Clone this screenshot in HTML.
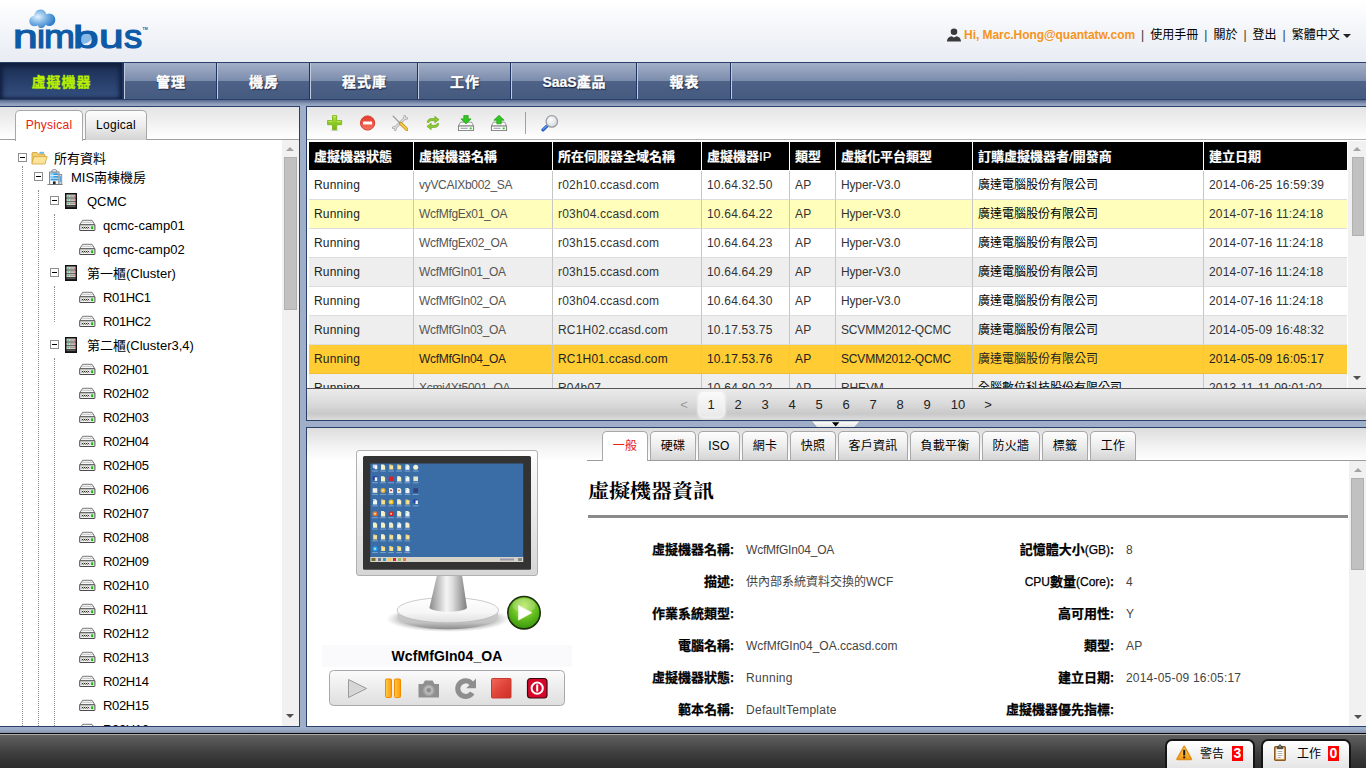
<!DOCTYPE html>
<html lang="zh-Hant"><head><meta charset="utf-8"><title>nimbus</title>
<style>

html,body{margin:0;padding:0;width:1366px;height:768px;overflow:hidden}
body{position:relative;background:#9fafc9;font-family:"Liberation Sans","Noto Sans CJK TC",sans-serif;font-size:12px;color:#000;line-height:1}
div,span,a,td,th{box-sizing:border-box}
.a{position:absolute}
svg{display:block}
/* header */
#hd{left:0;top:0;width:1366px;height:62px;background:linear-gradient(#fff 0,#f5f7fa 40%,#e8ecf3 100%)}
#logo{left:13px;top:14.9px;height:50px;font-weight:normal;-webkit-text-stroke:1.4px #0d5aa7;font-size:38.5px;line-height:50px;color:#0d5aa7;white-space:nowrap}
#logo span{display:inline-block;transform-origin:0 0}
#tm{left:142.5px;top:28px;font-size:3.5px;font-weight:bold;color:#0d5aa7}
#ub{right:15px;top:28px;height:15px;line-height:15px;font-size:12px;white-space:nowrap;color:#000}
#ub b{color:#f7941d;letter-spacing:-.06px}
#ub i{font-style:normal;margin:0 6px;color:#333}
/* nav */
#nav{left:0;top:62px;width:1366px;height:44px;background:linear-gradient(#5f6f90 0,#5f6f90 38px,#65759a 38px,#8e9ebb 41px,#9fafc9 44px);border-top:1px solid #2a3f6a}
#navin{left:0;top:0;width:1366px;height:37px;background:linear-gradient(#a3b0c8 0,#7b8bab 18px,#4f6287 18px,#455a80 36px);border-bottom:1px solid #2a3f6a}
.nb{top:0;height:36px;line-height:38px;text-align:center;color:#fff;font-weight:bold;font-size:14px;text-shadow:0 1px 1px #1c2b4a,1px 1px 1px #1c2b4a;border-left:1px solid #c2ccde;border-right:1px solid #1f3460;letter-spacing:1px;text-indent:1px;-webkit-text-stroke:.35px}
.nb u{text-decoration:none;letter-spacing:0;font-size:14px;-webkit-text-stroke:.2px}
.nb.on{background:linear-gradient(#1a2c50,#2a426f 60%,#35517f);color:#b8f000;text-shadow:none;border-left:none;border-right:2px solid #1f3460;box-shadow:inset 0 2px 6px #0f1c38,inset 2px 0 4px #15254a,inset -2px 0 4px #15254a}
/* panels */
.pn{background:#fff;border:1px solid #2a3f6a}
.tabstrip{background:linear-gradient(#e4e4e4,#fff)}
.tab{border:1px solid #a8a8a8;border-bottom:none;border-radius:5px 5px 0 0;text-align:center;font-size:12px;letter-spacing:.25px;background:linear-gradient(#fdfdfd,#ededed 50%,#d4d4d4);color:#000}
.tab.on{background:#fff;color:#e8220c}
.sbt{background:#f1f1f1}
.sbh{background:#c1c1c1;border:1px solid #b0b0b0}
.tri-u{width:0;height:0;border-left:4px solid transparent;border-right:4px solid transparent;border-bottom:4px solid #a3a3a3}
.tri-d{width:0;height:0;border-left:4px solid transparent;border-right:4px solid transparent;border-top:4px solid #505050}
/* tree */
.tr{left:0;height:16px;line-height:16px;font-size:13px;white-space:nowrap;color:#000}
.tr span{position:absolute;top:0}
.eb{width:9px;height:9px;border:1px solid #8f8f8f;background:#fff}
.eb:after{content:"";position:absolute;left:1px;top:3px;width:5px;height:1px;background:#000}
.vl{width:0;border-left:1px dotted #8c8c8c}
/* grid */
#grid{left:2px;top:1px;width:1038px;border-collapse:separate;border-spacing:0;table-layout:fixed}
#grid th{height:29px;-webkit-text-stroke:.2px;border-bottom:1px solid #fff;background:#000;color:#fff;font-weight:normal;font-size:13px;text-align:left;padding:0 0 0 5px;border-right:1px solid #fff;white-space:nowrap;overflow:hidden}
#grid td{height:29px;font-size:12px;padding:0 0 0 5px;border-right:1px solid #c6c6c6;border-bottom:1px solid #ddd;color:#333;white-space:nowrap;overflow:hidden;letter-spacing:.2px}
#grid td.c1{color:#222}
#grid td.c2{color:#555;letter-spacing:-.3px}
#grid td.cj{color:#000;letter-spacing:0}
#grid td.c6{letter-spacing:-.15px}
#grid tr.e td{background:#eee}
#grid tr.h td{background:#ffffbb}
#grid tr.s td{background:#ffcc33;color:#222;border-bottom-color:#f0c030}
#grid th:last-child,#grid td:last-child{border-right:none}
#pager{background:linear-gradient(#ebebeb 0,#d9d9d9 50%,#c9c9c9 80%,#dcdcdc 100%);border-top:1px solid #555}
.pg{top:0;height:32px;line-height:31px;font-size:13px;color:#222;text-align:center;width:20px}
/* detail */
.lb{font-weight:normal;-webkit-text-stroke:.25px;font-size:12px;text-align:right;white-space:nowrap;height:16px;line-height:16px;color:#000}
.lb .c{font-size:13px;font-weight:bold}
#grid th .c{font-size:13px;font-weight:bold}
.vv{font-size:12px;white-space:nowrap;height:16px;line-height:16px;color:#444;letter-spacing:0}
#ttl{font-family:"Liberation Serif","Noto Serif CJK SC",serif;font-weight:700;font-size:21px;line-height:24px;color:#000;white-space:nowrap;transform-origin:0 0;transform:scaleY(.94)}
/* footer */
#ft{left:0;top:733px;width:1366px;height:35px;overflow:hidden;background:linear-gradient(#626262,#3c3c3c 60%,#2c2c2c);border-top:1px solid #050505;box-shadow:inset 0 1px 0 #adadad}
.fb{top:5px;height:34px;border:2px solid #151515;border-radius:7px 7px 0 0;background:linear-gradient(#fff,#e2e2e2);font-size:12px}
.bd{background:#f00;color:#fff;font-weight:bold;font-size:14px;text-align:center;width:11px;height:15px;line-height:15px}

</style></head>
<body>
<div id="hd" class="a" style=""><div class="a" style="left:80px;top:33px;width:13px;height:11px;background:#86b8e8;border-radius:1px 1px 10px 3px"></div><div id="logo" class="a" style=""><span style="margin-left:0px;transform:scale(1.15,0.874)">n</span><span style="margin-left:2.42px;transform:scale(0.94,0.874)">i</span><span style="margin-left:-1.3px;transform:scale(0.964,0.874)">m</span><span style="margin-left:-3.23px;position:relative;top:1.4px;transform:scale(1.195,0.838)">b</span><span style="margin-left:4.19px;transform:scale(1.15,0.874)">u</span><span style="margin-left:4.1px;transform:scale(0.947,0.874)">s</span></div><div class="a" style="left:28.6px;top:8.8px"><svg width="28" height="20" viewBox="0 0 28 20" ><defs><radialGradient id="gc" cx=".33" cy=".4" r=".75"><stop offset="0" stop-color="#e6f3fc"/><stop offset=".45" stop-color="#7db5e6"/><stop offset="1" stop-color="#1f6fc0"/></radialGradient></defs><path transform="scale(1 1.06)" d="M5.2 16.2C2.2 16.2.3 14 .3 11.4.3 8.6 2.4 6.600 5 6.600 5.6 3 8.200.400 11.400.400c3 0 5.200 1.800 6 4.500 .8-.4 1.700-.6 2.600-.6 3.700 0 6.300 2.600 6.300 5.800 0 3.300-2.700 6-6 6-1.500 0-2.700-.4-3.700-1.200-.7 1.700-2.200 2.900-4 2.900-1.600 0-3-.9-3.700-2.200-1 .4-2.400.6-3.700.6z" fill="url(#gc)"/></svg></div><div id="tm" class="a" style="">TM</div><div class="a" style="left:947px;top:27.5px"><svg width="14" height="14" viewBox="0 0 14 14" ><circle cx="7" cy="3.8" r="3.3" fill="#3a3a3a"/><path d="M0 13.5c0-3 2.2-5 4.6-5.2L7 9.4l2.4-1.1c2.4.2 4.6 2.2 4.6 5.2z" fill="#3a3a3a"/></svg></div><div id="ub" class="a" style=""><b>Hi, Marc.Hong@quantatw.com</b><i>|</i>使用手冊<i>|</i>關於<i>|</i>登出<i>|</i>繁體中文 <span style="display:inline-block;width:0;height:0;border-left:4px solid transparent;border-right:4px solid transparent;border-top:4px solid #222;vertical-align:1px;margin-left:0"></span></div></div>
<div id="nav" class="a" style=""><div id="navin" class="a" style=""><div class="a nb on" style="left:0px;width:124px">虛擬機器</div><div class="a nb" style="left:124px;width:93px">管理</div><div class="a nb" style="left:217px;width:93px">機房</div><div class="a nb" style="left:310px;width:108px">程式庫</div><div class="a nb" style="left:418px;width:93px">工作</div><div class="a nb" style="left:511px;width:126px"><u>SaaS</u>產品</div><div class="a nb" style="left:637px;width:94px">報表</div><div class="a" style="left:731px;top:0;width:1px;height:36px;background:#c2ccde"></div></div></div>
<div class="a pn" style="left:-1px;top:106px;width:301px;height:621px"><div class="a tabstrip" style="left:0;top:0;width:299px;height:33px;border-bottom:1px solid #a0a0a0"></div><div class="a tab on" style="left:15px;top:3px;width:68px;height:31px;line-height:28px">Physical</div><div class="a tab" style="left:85px;top:3px;width:62px;height:30px;line-height:28px">Logical</div><div class="a" style="left:0;top:33px;width:282px;height:586px;overflow:hidden"><div class="a tr" style="top:10px;width:280px"><span class="eb" style="left:18px;top:3px"></span><span style="left:31px;top:1px"><svg width="17" height="14" viewBox="0 0 17 14" ><path d="M1 2.5c0-.6.4-1 1-1h4l1.4 1.6H13c.6 0 1 .4 1 1V12H1z" fill="#f3cf6e" stroke="#c9992e" stroke-width=".8"/><rect x="8.5" y=".8" width="4.5" height="2" fill="#6fb7e8"/><path d="M2.8 5.6h13.4L14 13H.8z" fill="#fbe39a" stroke="#d0a33a" stroke-width=".8"/></svg></span><span style="left:54px;top:1px">所有資料</span></div><div class="a tr" style="top:30px;width:280px"><span class="eb" style="left:34px;top:2px"></span><span style="left:47px;top:-1px"><svg width="16" height="16" viewBox="0 0 16 16" ><rect x="2.600" y="3" width="9.400" height="12.500" fill="#f4f7fa" stroke="#6c7680" stroke-width=".9"/><path d="M4.600 3c0-1.700 1.100-2.600 2.700-2.600S10 1.300 10 3z" fill="#e4e8ec" stroke="#6c7680" stroke-width=".8"/><g fill="#2f9be4"><rect x="3.600" y="4.200" width="7.400" height="1.800"/><rect x="3.600" y="6.900" width="7.400" height="1.800"/><rect x="3.600" y="9.600" width="7.400" height="1.800"/></g><g fill="#8fd0f6"><rect x="3.600" y="4.200" width="3" height="1.800"/><rect x="3.600" y="6.900" width="3" height="1.800"/></g><rect x="6" y="12.400" width="2.600" height="3.100" fill="#222"/><rect x="12" y="5.500" width="2.800" height="10" fill="#cfd8e0" stroke="#6c7680" stroke-width=".7"/><rect x="12.700" y="7" width="1.400" height="6" fill="#5aa8dc"/><rect x=".3" y="15.200" width="15.400" height=".8" fill="#777"/></svg></span><span style="left:71px">MIS南棟機房</span></div><div class="a tr" style="top:54px;width:280px"><span class="eb" style="left:50px;top:2px"></span><span style="left:65px;top:-1px"><svg width="12" height="16" viewBox="0 0 12 16" ><rect x=".5" y=".5" width="11" height="15" fill="#1e1e1e" stroke="#111" stroke-width="1"/><g fill="#dcdcdc"><rect x="1.500" y="1.600" width="9" height="3"/><rect x="1.500" y="5.400" width="9" height="3"/><rect x="1.500" y="9.200" width="9" height="3"/></g><g><rect x="2.400" y="2.600" width="1.600" height="1" fill="#2fae3c"/><rect x="4.800" y="2.600" width="3" height="1" fill="#888"/><rect x="8.400" y="2.600" width="1.300" height="1" fill="#d22"/><rect x="2.400" y="6.400" width="1.600" height="1" fill="#2fae3c"/><rect x="4.800" y="6.400" width="3" height="1" fill="#888"/><rect x="8.400" y="6.400" width="1.300" height="1" fill="#d22"/><rect x="2.400" y="10.200" width="1.600" height="1" fill="#2fae3c"/><rect x="4.800" y="10.200" width="3" height="1" fill="#888"/><rect x="8.400" y="10.200" width="1.300" height="1" fill="#d22"/></g><rect x="1.500" y="13" width="9" height=".8" fill="#666"/></svg></span><span style="left:87px">QCMC</span></div><div class="a tr" style="top:78px;width:280px"><span style="left:79px;top:1px"><svg width="17" height="13" viewBox="0 0 17 13" ><path d="M3.600 1.300h9.400l2.900 4.500H.7z" fill="#f6f6f6" stroke="#6a6a6a" stroke-width=".9" stroke-linejoin="round"/><path d="M3 3.400h10.600" stroke="#bdbdbd" stroke-width=".8"/><rect x=".7" y="5.800" width="15.200" height="5.700" rx=".4" fill="#f4f4f4" stroke="#4a4a4a" stroke-width="1"/><rect x="2.400" y="7.500" width="8" height="2.300" fill="#fff"/><path d="M2.600 7.800l1.600 1.700M4.200 7.800L2.600 9.500M4.600 7.800l1.600 1.700M6.200 7.800L4.600 9.500M6.600 7.800l1.600 1.700M8.200 7.800L6.600 9.500M8.600 7.800l1.600 1.700M10.200 7.800L8.600 9.500" stroke="#111" stroke-width=".75"/><rect x="11.900" y="7.300" width="2.300" height="2.800" fill="#25b81a"/></svg></span><span style="left:103px">qcmc-camp01</span></div><div class="a tr" style="top:102px;width:280px"><span style="left:79px;top:1px"><svg width="17" height="13" viewBox="0 0 17 13" ><path d="M3.600 1.300h9.400l2.900 4.500H.7z" fill="#f6f6f6" stroke="#6a6a6a" stroke-width=".9" stroke-linejoin="round"/><path d="M3 3.400h10.600" stroke="#bdbdbd" stroke-width=".8"/><rect x=".7" y="5.800" width="15.200" height="5.700" rx=".4" fill="#f4f4f4" stroke="#4a4a4a" stroke-width="1"/><rect x="2.400" y="7.500" width="8" height="2.300" fill="#fff"/><path d="M2.600 7.800l1.600 1.700M4.200 7.800L2.600 9.500M4.600 7.800l1.600 1.700M6.200 7.800L4.600 9.500M6.600 7.800l1.600 1.700M8.200 7.800L6.600 9.500M8.600 7.800l1.600 1.700M10.200 7.800L8.600 9.500" stroke="#111" stroke-width=".75"/><rect x="11.900" y="7.300" width="2.300" height="2.800" fill="#25b81a"/></svg></span><span style="left:103px">qcmc-camp02</span></div><div class="a tr" style="top:126px;width:280px"><span class="eb" style="left:50px;top:2px"></span><span style="left:65px;top:-1px"><svg width="12" height="16" viewBox="0 0 12 16" ><rect x=".5" y=".5" width="11" height="15" fill="#1e1e1e" stroke="#111" stroke-width="1"/><g fill="#dcdcdc"><rect x="1.500" y="1.600" width="9" height="3"/><rect x="1.500" y="5.400" width="9" height="3"/><rect x="1.500" y="9.200" width="9" height="3"/></g><g><rect x="2.400" y="2.600" width="1.600" height="1" fill="#2fae3c"/><rect x="4.800" y="2.600" width="3" height="1" fill="#888"/><rect x="8.400" y="2.600" width="1.300" height="1" fill="#d22"/><rect x="2.400" y="6.400" width="1.600" height="1" fill="#2fae3c"/><rect x="4.800" y="6.400" width="3" height="1" fill="#888"/><rect x="8.400" y="6.400" width="1.300" height="1" fill="#d22"/><rect x="2.400" y="10.200" width="1.600" height="1" fill="#2fae3c"/><rect x="4.800" y="10.200" width="3" height="1" fill="#888"/><rect x="8.400" y="10.200" width="1.300" height="1" fill="#d22"/></g><rect x="1.500" y="13" width="9" height=".8" fill="#666"/></svg></span><span style="left:87px">第一櫃(Cluster)</span></div><div class="a tr" style="top:150px;width:280px"><span style="left:79px;top:1px"><svg width="17" height="13" viewBox="0 0 17 13" ><path d="M3.600 1.300h9.400l2.900 4.500H.7z" fill="#f6f6f6" stroke="#6a6a6a" stroke-width=".9" stroke-linejoin="round"/><path d="M3 3.400h10.600" stroke="#bdbdbd" stroke-width=".8"/><rect x=".7" y="5.800" width="15.200" height="5.700" rx=".4" fill="#f4f4f4" stroke="#4a4a4a" stroke-width="1"/><rect x="2.400" y="7.500" width="8" height="2.300" fill="#fff"/><path d="M2.600 7.800l1.600 1.700M4.200 7.800L2.600 9.500M4.600 7.800l1.600 1.700M6.200 7.800L4.600 9.500M6.600 7.800l1.600 1.700M8.200 7.800L6.600 9.500M8.600 7.800l1.600 1.700M10.200 7.800L8.600 9.500" stroke="#111" stroke-width=".75"/><rect x="11.900" y="7.300" width="2.300" height="2.800" fill="#25b81a"/></svg></span><span style="left:103px;letter-spacing:-.35px">R01HC1</span></div><div class="a tr" style="top:174px;width:280px"><span style="left:79px;top:1px"><svg width="17" height="13" viewBox="0 0 17 13" ><path d="M3.600 1.300h9.400l2.900 4.500H.7z" fill="#f6f6f6" stroke="#6a6a6a" stroke-width=".9" stroke-linejoin="round"/><path d="M3 3.400h10.600" stroke="#bdbdbd" stroke-width=".8"/><rect x=".7" y="5.800" width="15.200" height="5.700" rx=".4" fill="#f4f4f4" stroke="#4a4a4a" stroke-width="1"/><rect x="2.400" y="7.500" width="8" height="2.300" fill="#fff"/><path d="M2.600 7.800l1.600 1.700M4.200 7.800L2.600 9.500M4.600 7.800l1.600 1.700M6.200 7.800L4.600 9.500M6.600 7.800l1.600 1.700M8.200 7.800L6.600 9.500M8.600 7.800l1.600 1.700M10.200 7.800L8.600 9.500" stroke="#111" stroke-width=".75"/><rect x="11.900" y="7.300" width="2.300" height="2.800" fill="#25b81a"/></svg></span><span style="left:103px;letter-spacing:-.35px">R01HC2</span></div><div class="a tr" style="top:198px;width:280px"><span class="eb" style="left:50px;top:2px"></span><span style="left:65px;top:-1px"><svg width="12" height="16" viewBox="0 0 12 16" ><rect x=".5" y=".5" width="11" height="15" fill="#1e1e1e" stroke="#111" stroke-width="1"/><g fill="#dcdcdc"><rect x="1.500" y="1.600" width="9" height="3"/><rect x="1.500" y="5.400" width="9" height="3"/><rect x="1.500" y="9.200" width="9" height="3"/></g><g><rect x="2.400" y="2.600" width="1.600" height="1" fill="#2fae3c"/><rect x="4.800" y="2.600" width="3" height="1" fill="#888"/><rect x="8.400" y="2.600" width="1.300" height="1" fill="#d22"/><rect x="2.400" y="6.400" width="1.600" height="1" fill="#2fae3c"/><rect x="4.800" y="6.400" width="3" height="1" fill="#888"/><rect x="8.400" y="6.400" width="1.300" height="1" fill="#d22"/><rect x="2.400" y="10.200" width="1.600" height="1" fill="#2fae3c"/><rect x="4.800" y="10.200" width="3" height="1" fill="#888"/><rect x="8.400" y="10.200" width="1.300" height="1" fill="#d22"/></g><rect x="1.500" y="13" width="9" height=".8" fill="#666"/></svg></span><span style="left:87px">第二櫃(Cluster3,4)</span></div><div class="a tr" style="top:222px;width:280px"><span style="left:79px;top:1px"><svg width="17" height="13" viewBox="0 0 17 13" ><path d="M3.600 1.300h9.400l2.900 4.500H.7z" fill="#f6f6f6" stroke="#6a6a6a" stroke-width=".9" stroke-linejoin="round"/><path d="M3 3.400h10.600" stroke="#bdbdbd" stroke-width=".8"/><rect x=".7" y="5.800" width="15.200" height="5.700" rx=".4" fill="#f4f4f4" stroke="#4a4a4a" stroke-width="1"/><rect x="2.400" y="7.500" width="8" height="2.300" fill="#fff"/><path d="M2.600 7.800l1.600 1.700M4.200 7.800L2.600 9.500M4.600 7.800l1.600 1.700M6.200 7.800L4.600 9.500M6.600 7.800l1.600 1.700M8.200 7.800L6.600 9.500M8.600 7.800l1.600 1.700M10.200 7.800L8.600 9.500" stroke="#111" stroke-width=".75"/><rect x="11.900" y="7.300" width="2.300" height="2.800" fill="#25b81a"/></svg></span><span style="left:103px;letter-spacing:-.35px">R02H01</span></div><div class="a tr" style="top:246px;width:280px"><span style="left:79px;top:1px"><svg width="17" height="13" viewBox="0 0 17 13" ><path d="M3.600 1.300h9.400l2.900 4.500H.7z" fill="#f6f6f6" stroke="#6a6a6a" stroke-width=".9" stroke-linejoin="round"/><path d="M3 3.400h10.600" stroke="#bdbdbd" stroke-width=".8"/><rect x=".7" y="5.800" width="15.200" height="5.700" rx=".4" fill="#f4f4f4" stroke="#4a4a4a" stroke-width="1"/><rect x="2.400" y="7.500" width="8" height="2.300" fill="#fff"/><path d="M2.600 7.800l1.600 1.700M4.200 7.800L2.600 9.500M4.600 7.800l1.600 1.700M6.200 7.800L4.600 9.500M6.600 7.800l1.600 1.700M8.200 7.800L6.600 9.500M8.600 7.800l1.600 1.700M10.200 7.800L8.600 9.500" stroke="#111" stroke-width=".75"/><rect x="11.900" y="7.300" width="2.300" height="2.800" fill="#25b81a"/></svg></span><span style="left:103px;letter-spacing:-.35px">R02H02</span></div><div class="a tr" style="top:270px;width:280px"><span style="left:79px;top:1px"><svg width="17" height="13" viewBox="0 0 17 13" ><path d="M3.600 1.300h9.400l2.900 4.500H.7z" fill="#f6f6f6" stroke="#6a6a6a" stroke-width=".9" stroke-linejoin="round"/><path d="M3 3.400h10.600" stroke="#bdbdbd" stroke-width=".8"/><rect x=".7" y="5.800" width="15.200" height="5.700" rx=".4" fill="#f4f4f4" stroke="#4a4a4a" stroke-width="1"/><rect x="2.400" y="7.500" width="8" height="2.300" fill="#fff"/><path d="M2.600 7.800l1.600 1.700M4.200 7.800L2.600 9.500M4.600 7.800l1.600 1.700M6.200 7.800L4.600 9.500M6.600 7.800l1.600 1.700M8.200 7.800L6.600 9.500M8.600 7.800l1.600 1.700M10.200 7.800L8.600 9.500" stroke="#111" stroke-width=".75"/><rect x="11.900" y="7.300" width="2.300" height="2.800" fill="#25b81a"/></svg></span><span style="left:103px;letter-spacing:-.35px">R02H03</span></div><div class="a tr" style="top:294px;width:280px"><span style="left:79px;top:1px"><svg width="17" height="13" viewBox="0 0 17 13" ><path d="M3.600 1.300h9.400l2.900 4.500H.7z" fill="#f6f6f6" stroke="#6a6a6a" stroke-width=".9" stroke-linejoin="round"/><path d="M3 3.400h10.600" stroke="#bdbdbd" stroke-width=".8"/><rect x=".7" y="5.800" width="15.200" height="5.700" rx=".4" fill="#f4f4f4" stroke="#4a4a4a" stroke-width="1"/><rect x="2.400" y="7.500" width="8" height="2.300" fill="#fff"/><path d="M2.600 7.800l1.600 1.700M4.200 7.800L2.600 9.500M4.600 7.800l1.600 1.700M6.200 7.800L4.600 9.500M6.600 7.800l1.600 1.700M8.200 7.800L6.600 9.500M8.600 7.800l1.600 1.700M10.200 7.800L8.600 9.500" stroke="#111" stroke-width=".75"/><rect x="11.900" y="7.300" width="2.300" height="2.800" fill="#25b81a"/></svg></span><span style="left:103px;letter-spacing:-.35px">R02H04</span></div><div class="a tr" style="top:318px;width:280px"><span style="left:79px;top:1px"><svg width="17" height="13" viewBox="0 0 17 13" ><path d="M3.600 1.300h9.400l2.900 4.500H.7z" fill="#f6f6f6" stroke="#6a6a6a" stroke-width=".9" stroke-linejoin="round"/><path d="M3 3.400h10.600" stroke="#bdbdbd" stroke-width=".8"/><rect x=".7" y="5.800" width="15.200" height="5.700" rx=".4" fill="#f4f4f4" stroke="#4a4a4a" stroke-width="1"/><rect x="2.400" y="7.500" width="8" height="2.300" fill="#fff"/><path d="M2.600 7.800l1.600 1.700M4.200 7.800L2.600 9.500M4.600 7.800l1.600 1.700M6.200 7.800L4.600 9.500M6.600 7.800l1.600 1.700M8.200 7.800L6.600 9.500M8.600 7.800l1.600 1.700M10.200 7.800L8.600 9.500" stroke="#111" stroke-width=".75"/><rect x="11.900" y="7.300" width="2.300" height="2.800" fill="#25b81a"/></svg></span><span style="left:103px;letter-spacing:-.35px">R02H05</span></div><div class="a tr" style="top:342px;width:280px"><span style="left:79px;top:1px"><svg width="17" height="13" viewBox="0 0 17 13" ><path d="M3.600 1.300h9.400l2.900 4.500H.7z" fill="#f6f6f6" stroke="#6a6a6a" stroke-width=".9" stroke-linejoin="round"/><path d="M3 3.400h10.600" stroke="#bdbdbd" stroke-width=".8"/><rect x=".7" y="5.800" width="15.200" height="5.700" rx=".4" fill="#f4f4f4" stroke="#4a4a4a" stroke-width="1"/><rect x="2.400" y="7.500" width="8" height="2.300" fill="#fff"/><path d="M2.600 7.800l1.600 1.700M4.200 7.800L2.600 9.500M4.600 7.800l1.600 1.700M6.200 7.800L4.600 9.500M6.600 7.800l1.600 1.700M8.200 7.800L6.600 9.500M8.600 7.800l1.600 1.700M10.200 7.800L8.600 9.500" stroke="#111" stroke-width=".75"/><rect x="11.900" y="7.300" width="2.300" height="2.800" fill="#25b81a"/></svg></span><span style="left:103px;letter-spacing:-.35px">R02H06</span></div><div class="a tr" style="top:366px;width:280px"><span style="left:79px;top:1px"><svg width="17" height="13" viewBox="0 0 17 13" ><path d="M3.600 1.300h9.400l2.900 4.500H.7z" fill="#f6f6f6" stroke="#6a6a6a" stroke-width=".9" stroke-linejoin="round"/><path d="M3 3.400h10.600" stroke="#bdbdbd" stroke-width=".8"/><rect x=".7" y="5.800" width="15.200" height="5.700" rx=".4" fill="#f4f4f4" stroke="#4a4a4a" stroke-width="1"/><rect x="2.400" y="7.500" width="8" height="2.300" fill="#fff"/><path d="M2.600 7.800l1.600 1.700M4.200 7.800L2.600 9.500M4.600 7.800l1.600 1.700M6.200 7.800L4.600 9.500M6.600 7.800l1.600 1.700M8.200 7.800L6.600 9.500M8.600 7.800l1.600 1.700M10.200 7.800L8.600 9.500" stroke="#111" stroke-width=".75"/><rect x="11.900" y="7.300" width="2.300" height="2.800" fill="#25b81a"/></svg></span><span style="left:103px;letter-spacing:-.35px">R02H07</span></div><div class="a tr" style="top:390px;width:280px"><span style="left:79px;top:1px"><svg width="17" height="13" viewBox="0 0 17 13" ><path d="M3.600 1.300h9.400l2.900 4.500H.7z" fill="#f6f6f6" stroke="#6a6a6a" stroke-width=".9" stroke-linejoin="round"/><path d="M3 3.400h10.600" stroke="#bdbdbd" stroke-width=".8"/><rect x=".7" y="5.800" width="15.200" height="5.700" rx=".4" fill="#f4f4f4" stroke="#4a4a4a" stroke-width="1"/><rect x="2.400" y="7.500" width="8" height="2.300" fill="#fff"/><path d="M2.600 7.800l1.600 1.700M4.200 7.800L2.600 9.500M4.600 7.800l1.600 1.700M6.200 7.800L4.600 9.500M6.600 7.800l1.600 1.700M8.200 7.800L6.600 9.500M8.600 7.800l1.600 1.700M10.200 7.800L8.600 9.500" stroke="#111" stroke-width=".75"/><rect x="11.900" y="7.300" width="2.300" height="2.800" fill="#25b81a"/></svg></span><span style="left:103px;letter-spacing:-.35px">R02H08</span></div><div class="a tr" style="top:414px;width:280px"><span style="left:79px;top:1px"><svg width="17" height="13" viewBox="0 0 17 13" ><path d="M3.600 1.300h9.400l2.900 4.500H.7z" fill="#f6f6f6" stroke="#6a6a6a" stroke-width=".9" stroke-linejoin="round"/><path d="M3 3.400h10.600" stroke="#bdbdbd" stroke-width=".8"/><rect x=".7" y="5.800" width="15.200" height="5.700" rx=".4" fill="#f4f4f4" stroke="#4a4a4a" stroke-width="1"/><rect x="2.400" y="7.500" width="8" height="2.300" fill="#fff"/><path d="M2.600 7.800l1.600 1.700M4.200 7.800L2.600 9.500M4.600 7.800l1.600 1.700M6.200 7.800L4.600 9.500M6.600 7.800l1.600 1.700M8.200 7.800L6.600 9.500M8.600 7.800l1.600 1.700M10.200 7.800L8.600 9.500" stroke="#111" stroke-width=".75"/><rect x="11.900" y="7.300" width="2.300" height="2.800" fill="#25b81a"/></svg></span><span style="left:103px;letter-spacing:-.35px">R02H09</span></div><div class="a tr" style="top:438px;width:280px"><span style="left:79px;top:1px"><svg width="17" height="13" viewBox="0 0 17 13" ><path d="M3.600 1.300h9.400l2.900 4.500H.7z" fill="#f6f6f6" stroke="#6a6a6a" stroke-width=".9" stroke-linejoin="round"/><path d="M3 3.400h10.600" stroke="#bdbdbd" stroke-width=".8"/><rect x=".7" y="5.800" width="15.200" height="5.700" rx=".4" fill="#f4f4f4" stroke="#4a4a4a" stroke-width="1"/><rect x="2.400" y="7.500" width="8" height="2.300" fill="#fff"/><path d="M2.600 7.800l1.600 1.700M4.200 7.800L2.600 9.500M4.600 7.800l1.600 1.700M6.200 7.800L4.600 9.500M6.600 7.800l1.600 1.700M8.200 7.800L6.600 9.500M8.600 7.800l1.600 1.700M10.200 7.800L8.600 9.500" stroke="#111" stroke-width=".75"/><rect x="11.900" y="7.300" width="2.300" height="2.800" fill="#25b81a"/></svg></span><span style="left:103px;letter-spacing:-.35px">R02H10</span></div><div class="a tr" style="top:462px;width:280px"><span style="left:79px;top:1px"><svg width="17" height="13" viewBox="0 0 17 13" ><path d="M3.600 1.300h9.400l2.900 4.500H.7z" fill="#f6f6f6" stroke="#6a6a6a" stroke-width=".9" stroke-linejoin="round"/><path d="M3 3.400h10.600" stroke="#bdbdbd" stroke-width=".8"/><rect x=".7" y="5.800" width="15.200" height="5.700" rx=".4" fill="#f4f4f4" stroke="#4a4a4a" stroke-width="1"/><rect x="2.400" y="7.500" width="8" height="2.300" fill="#fff"/><path d="M2.600 7.800l1.600 1.700M4.200 7.800L2.600 9.500M4.600 7.800l1.600 1.700M6.200 7.800L4.600 9.500M6.600 7.800l1.600 1.700M8.200 7.800L6.600 9.500M8.600 7.800l1.600 1.700M10.200 7.800L8.600 9.500" stroke="#111" stroke-width=".75"/><rect x="11.900" y="7.300" width="2.300" height="2.800" fill="#25b81a"/></svg></span><span style="left:103px;letter-spacing:-.35px">R02H11</span></div><div class="a tr" style="top:486px;width:280px"><span style="left:79px;top:1px"><svg width="17" height="13" viewBox="0 0 17 13" ><path d="M3.600 1.300h9.400l2.900 4.500H.7z" fill="#f6f6f6" stroke="#6a6a6a" stroke-width=".9" stroke-linejoin="round"/><path d="M3 3.400h10.600" stroke="#bdbdbd" stroke-width=".8"/><rect x=".7" y="5.800" width="15.200" height="5.700" rx=".4" fill="#f4f4f4" stroke="#4a4a4a" stroke-width="1"/><rect x="2.400" y="7.500" width="8" height="2.300" fill="#fff"/><path d="M2.600 7.800l1.600 1.700M4.200 7.800L2.600 9.500M4.600 7.800l1.600 1.700M6.200 7.800L4.600 9.500M6.600 7.800l1.600 1.700M8.200 7.800L6.600 9.500M8.600 7.800l1.600 1.700M10.200 7.800L8.600 9.500" stroke="#111" stroke-width=".75"/><rect x="11.900" y="7.300" width="2.300" height="2.800" fill="#25b81a"/></svg></span><span style="left:103px;letter-spacing:-.35px">R02H12</span></div><div class="a tr" style="top:510px;width:280px"><span style="left:79px;top:1px"><svg width="17" height="13" viewBox="0 0 17 13" ><path d="M3.600 1.300h9.400l2.900 4.500H.7z" fill="#f6f6f6" stroke="#6a6a6a" stroke-width=".9" stroke-linejoin="round"/><path d="M3 3.400h10.600" stroke="#bdbdbd" stroke-width=".8"/><rect x=".7" y="5.800" width="15.200" height="5.700" rx=".4" fill="#f4f4f4" stroke="#4a4a4a" stroke-width="1"/><rect x="2.400" y="7.500" width="8" height="2.300" fill="#fff"/><path d="M2.600 7.800l1.600 1.700M4.200 7.800L2.600 9.500M4.600 7.800l1.600 1.700M6.200 7.800L4.600 9.500M6.600 7.800l1.600 1.700M8.200 7.800L6.600 9.500M8.600 7.800l1.600 1.700M10.200 7.800L8.600 9.500" stroke="#111" stroke-width=".75"/><rect x="11.900" y="7.300" width="2.300" height="2.800" fill="#25b81a"/></svg></span><span style="left:103px;letter-spacing:-.35px">R02H13</span></div><div class="a tr" style="top:534px;width:280px"><span style="left:79px;top:1px"><svg width="17" height="13" viewBox="0 0 17 13" ><path d="M3.600 1.300h9.400l2.900 4.500H.7z" fill="#f6f6f6" stroke="#6a6a6a" stroke-width=".9" stroke-linejoin="round"/><path d="M3 3.400h10.600" stroke="#bdbdbd" stroke-width=".8"/><rect x=".7" y="5.800" width="15.200" height="5.700" rx=".4" fill="#f4f4f4" stroke="#4a4a4a" stroke-width="1"/><rect x="2.400" y="7.500" width="8" height="2.300" fill="#fff"/><path d="M2.600 7.800l1.600 1.700M4.200 7.800L2.600 9.500M4.600 7.800l1.600 1.700M6.200 7.800L4.600 9.500M6.600 7.800l1.600 1.700M8.200 7.800L6.600 9.500M8.600 7.800l1.600 1.700M10.200 7.800L8.600 9.500" stroke="#111" stroke-width=".75"/><rect x="11.900" y="7.300" width="2.300" height="2.800" fill="#25b81a"/></svg></span><span style="left:103px;letter-spacing:-.35px">R02H14</span></div><div class="a tr" style="top:558px;width:280px"><span style="left:79px;top:1px"><svg width="17" height="13" viewBox="0 0 17 13" ><path d="M3.600 1.300h9.400l2.900 4.500H.7z" fill="#f6f6f6" stroke="#6a6a6a" stroke-width=".9" stroke-linejoin="round"/><path d="M3 3.400h10.600" stroke="#bdbdbd" stroke-width=".8"/><rect x=".7" y="5.800" width="15.200" height="5.700" rx=".4" fill="#f4f4f4" stroke="#4a4a4a" stroke-width="1"/><rect x="2.400" y="7.500" width="8" height="2.300" fill="#fff"/><path d="M2.600 7.800l1.600 1.700M4.200 7.800L2.600 9.500M4.600 7.800l1.600 1.700M6.200 7.800L4.600 9.500M6.600 7.800l1.600 1.700M8.200 7.800L6.600 9.500M8.600 7.800l1.600 1.700M10.200 7.800L8.600 9.500" stroke="#111" stroke-width=".75"/><rect x="11.900" y="7.300" width="2.300" height="2.800" fill="#25b81a"/></svg></span><span style="left:103px;letter-spacing:-.35px">R02H15</span></div><div class="a tr" style="top:582px;width:280px"><span style="left:79px;top:1px"><svg width="17" height="13" viewBox="0 0 17 13" ><path d="M3.600 1.300h9.400l2.900 4.500H.7z" fill="#f6f6f6" stroke="#6a6a6a" stroke-width=".9" stroke-linejoin="round"/><path d="M3 3.400h10.600" stroke="#bdbdbd" stroke-width=".8"/><rect x=".7" y="5.800" width="15.200" height="5.700" rx=".4" fill="#f4f4f4" stroke="#4a4a4a" stroke-width="1"/><rect x="2.400" y="7.500" width="8" height="2.300" fill="#fff"/><path d="M2.600 7.800l1.600 1.700M4.200 7.800L2.600 9.500M4.600 7.800l1.600 1.700M6.200 7.800L4.600 9.500M6.600 7.800l1.600 1.700M8.200 7.800L6.600 9.500M8.600 7.800l1.600 1.700M10.200 7.800L8.600 9.500" stroke="#111" stroke-width=".75"/><rect x="11.900" y="7.300" width="2.300" height="2.800" fill="#25b81a"/></svg></span><span style="left:103px;letter-spacing:-.35px">R02H16</span></div><div class="a vl" style="left:22px;top:26px;height:562px"></div><div class="a vl" style="left:38px;top:50px;height:538px"></div><div class="a vl" style="left:54px;top:74px;height:36px"></div><div class="a vl" style="left:54px;top:146px;height:36px"></div><div class="a vl" style="left:54px;top:218px;height:370px"></div></div><div class="a sbt" style="left:282px;top:33px;width:17px;height:586px"><div class="a tri-u" style="left:4px;top:7px"></div><div class="a sbh" style="left:2px;top:17px;width:13px;height:153px"></div><div class="a tri-d" style="left:4px;top:574px"></div></div></div>
<div class="a pn" style="left:306px;top:106px;width:1061px;height:315px;border-right:none"><div class="a tabstrip" style="left:0;top:0;width:1059px;height:33px;border-bottom:1px solid #b0b0b0"><div class="a" style="left:20px;top:8px"><svg width="16" height="16" viewBox="0 0 16 16" ><defs><linearGradient id="gp" x1="0" y1="0" x2="0" y2="1"><stop offset="0" stop-color="#b4e24c"/><stop offset=".5" stop-color="#8fcb24"/><stop offset="1" stop-color="#78b410"/></linearGradient></defs><ellipse cx="7.6" cy="15.300" rx="4" ry=".6" fill="#999" opacity=".5"/><path d="M5.500 .6h4.200v4.900h4.900v4.200H9.700v4.900H5.500V9.700H.6V5.500h4.900z" fill="url(#gp)" stroke="#7cb518" stroke-width=".9" stroke-linejoin="round"/><path d="M6.300 1.500h2.600M1.500 6.300h3.800M9.900 6.300h3.800" stroke="#d8f29a" stroke-width=".7"/></svg></div><div class="a" style="left:53px;top:8px"><svg width="16" height="16" viewBox="0 0 16 16" ><defs><linearGradient id="gm" x1="0" y1="0" x2="0" y2="1"><stop offset="0" stop-color="#e33c2c"/><stop offset=".5" stop-color="#ec5442"/><stop offset="1" stop-color="#f47a62"/></linearGradient></defs><circle cx="7.600" cy="8" r="7.100" fill="url(#gm)" stroke="#d93c2e" stroke-width="1"/><rect x="3.100" y="6.600" width="9" height="2.900" rx=".3" fill="#fff"/></svg></div><div class="a" style="left:85px;top:8px"><svg width="16" height="16" viewBox="0 0 16 16" ><g fill="none" stroke-linecap="round"><path d="M3 13L13 3" stroke="#a2a2a2" stroke-width="2.800"/><path d="M12.400 3.600L12.700 1M12.400 3.600L15 3.300M3.600 12.400L1 12.700M3.600 12.400L3.300 15" stroke="#a2a2a2" stroke-width="2.200"/><path d="M3 13L13 3" stroke="#e2e2e2" stroke-width="1.500"/><path d="M12.400 3.600L12.700 1.100M12.400 3.600L14.900 3.300M3.600 12.400L1.100 12.700M3.600 12.400L3.300 14.900" stroke="#e2e2e2" stroke-width="1"/><path d="M1.200 1.300l7.300 7.200" stroke="#9e9e9e" stroke-width="1.300"/><path d="M8.800 8.500l6 5.900" stroke="#b98a14" stroke-width="3.200"/><path d="M8.900 8.600l5.800 5.700" stroke="#f6cc40" stroke-width="1.900"/></g></svg></div><div class="a" style="left:118px;top:8px"><svg width="16" height="16" viewBox="0 0 16 16" ><g fill="#8cc832" stroke="#6aa018" stroke-width=".6" stroke-linejoin="round"><path d="M2.200 7.400c.2-2.500 2-3.900 4.300-3.900h3.300V1.300l4.300 3.300-4.300 3.300V5.700H6.700c-1.300 0-2.300.6-2.700 1.700z"/><path d="M13.800 8.600c-.2 2.500-2 3.900-4.300 3.900H6.200v2.200L1.900 11.400l4.300-3.300v2.200h3.100c1.300 0 2.300-.6 2.700-1.700z"/></g></svg></div><div class="a" style="left:150px;top:8px"><svg width="18" height="16" viewBox="0 0 18 16" ><path d="M3.400 7.200h11.200l2 3.800H1.400z" fill="#fafafa" stroke="#909090" stroke-width=".9" stroke-linejoin="round"/><rect x="1.500" y="11" width="15" height="4.600" fill="#fff" stroke="#868686" stroke-width="1.100"/><rect x="3.600" y="12.700" width="7" height="1.300" fill="#a9adbc"/><rect x="12.700" y="12.500" width="2" height="1.800" fill="#2fc41e"/><path d="M6.800 .4h4.400v3.500h2.900L9 8.800 3.900 3.900h2.900z" fill="#2fc820" stroke="#249a18" stroke-width=".7" stroke-linejoin="round"/></svg></div><div class="a" style="left:183px;top:8px"><svg width="18" height="16" viewBox="0 0 18 16" ><path d="M3.400 7.200h11.200l2 3.800H1.400z" fill="#fafafa" stroke="#909090" stroke-width=".9" stroke-linejoin="round"/><rect x="1.500" y="11" width="15" height="4.600" fill="#fff" stroke="#868686" stroke-width="1.100"/><rect x="3.600" y="12.700" width="7" height="1.300" fill="#a9adbc"/><rect x="12.700" y="12.500" width="2" height="1.800" fill="#2fc41e"/><path d="M6.800 8.800h4.400V5.200h2.900L9 .3 3.900 5.200h2.900z" fill="#2fc820" stroke="#249a18" stroke-width=".7" stroke-linejoin="round"/></svg></div><div class="a" style="left:234px;top:8px"><svg width="18" height="17" viewBox="0 0 18 17" ><defs><radialGradient id="gg" cx=".4" cy=".35" r=".7"><stop offset="0" stop-color="#fdfdfd"/><stop offset="1" stop-color="#d4d8dc"/></radialGradient></defs><path d="M2 14.800l4.400-4.200" stroke="#2458c8" stroke-width="3.200" stroke-linecap="round"/><path d="M2.200 14.200l3.800-3.600" stroke="#6aa4f4" stroke-width="1.100" stroke-linecap="round"/><circle cx="10.800" cy="6.400" r="5.700" fill="url(#gg)" stroke="#9a9ea4" stroke-width="1.300"/></svg></div><div class="a" style="left:218px;top:5px;width:1px;height:22px;background:#a0a0a0"></div></div><div class="a" style="left:0;top:34px;width:1059px;height:247px;overflow:hidden;background:#fff"><table id="grid" class="a"><colgroup><col style="width:105px"><col style="width:139px"><col style="width:149px"><col style="width:88px"><col style="width:46px"><col style="width:137px"><col style="width:231px"><col style="width:143px"></colgroup><tr><th><span class="c">虛擬機器狀態</span></th><th><span class="c">虛擬機器名稱</span></th><th><span class="c">所在伺服器全域名稱</span></th><th><span class="c">虛擬機器</span>IP</th><th><span class="c">類型</span></th><th><span class="c">虛擬化平台類型</span></th><th><span class="c">訂購虛擬機器者</span>/<span class="c">開發商</span></th><th><span class="c">建立日期</span></th></tr><tr class=""><td class="c1">Running</td><td class="c2">vyVCAIXb002_SA</td><td>r02h10.ccasd.com</td><td>10.64.32.50</td><td>AP</td><td class="c6">Hyper-V3.0</td><td class="cj">廣達電腦股份有限公司</td><td>2014-06-25 16:59:39</td></tr><tr class="h"><td class="c1">Running</td><td class="c2">WcfMfgEx01_OA</td><td>r03h04.ccasd.com</td><td>10.64.64.22</td><td>AP</td><td class="c6">Hyper-V3.0</td><td class="cj">廣達電腦股份有限公司</td><td>2014-07-16 11:24:18</td></tr><tr class=""><td class="c1">Running</td><td class="c2">WcfMfgEx02_OA</td><td>r03h15.ccasd.com</td><td>10.64.64.23</td><td>AP</td><td class="c6">Hyper-V3.0</td><td class="cj">廣達電腦股份有限公司</td><td>2014-07-16 11:24:18</td></tr><tr class="e"><td class="c1">Running</td><td class="c2">WcfMfGIn01_OA</td><td>r03h15.ccasd.com</td><td>10.64.64.29</td><td>AP</td><td class="c6">Hyper-V3.0</td><td class="cj">廣達電腦股份有限公司</td><td>2014-07-16 11:24:18</td></tr><tr class=""><td class="c1">Running</td><td class="c2">WcfMfGIn02_OA</td><td>r03h04.ccasd.com</td><td>10.64.64.30</td><td>AP</td><td class="c6">Hyper-V3.0</td><td class="cj">廣達電腦股份有限公司</td><td>2014-07-16 11:24:18</td></tr><tr class="e"><td class="c1">Running</td><td class="c2">WcfMfGIn03_OA</td><td>RC1H02.ccasd.com</td><td>10.17.53.75</td><td>AP</td><td class="c6">SCVMM2012-QCMC</td><td class="cj">廣達電腦股份有限公司</td><td>2014-05-09 16:48:32</td></tr><tr class="s"><td class="c1">Running</td><td class="c2">WcfMfGIn04_OA</td><td>RC1H01.ccasd.com</td><td>10.17.53.76</td><td>AP</td><td class="c6">SCVMM2012-QCMC</td><td class="cj">廣達電腦股份有限公司</td><td>2014-05-09 16:05:17</td></tr><tr class="e"><td class="c1">Running</td><td class="c2">Xcmi4Xt5001_OA</td><td>R04h07</td><td>10.64.80.22</td><td>AP</td><td class="c6">RHEVM</td><td class="cj">全腦數位科技股份有限公司</td><td>2013-11-11 09:01:02</td></tr></table></div><div class="a sbt" style="left:1041px;top:34px;width:18px;height:247px"><div class="a tri-u" style="left:5px;top:6px"></div><div class="a sbh" style="left:4px;top:16px;width:12px;height:79px"></div><div class="a tri-d" style="left:5px;top:235px"></div></div><div id="pager" class="a" style="left:0;top:281px;width:1059px;height:32px"><div class="a" style="left:391px;top:2px;width:27px;height:27px;border-radius:5px;background:linear-gradient(#fafafa,#e9e9e9);box-shadow:0 0 3px #fff,inset 0 0 1px #fff;border:1px solid #f0f0f0"></div><div class="a pg" style="left:367px;color:#999">&lt;</div><div class="a pg" style="left:394px">1</div><div class="a pg" style="left:421px">2</div><div class="a pg" style="left:448px">3</div><div class="a pg" style="left:475px">4</div><div class="a pg" style="left:502px">5</div><div class="a pg" style="left:529px">6</div><div class="a pg" style="left:556px">7</div><div class="a pg" style="left:583px">8</div><div class="a pg" style="left:610px">9</div><div class="a pg" style="left:641px">10</div><div class="a pg" style="left:671px">&gt;</div></div></div>
<div class="a" style="left:811px;top:421px"><svg width="50" height="7" viewBox="0 0 50 7" ><defs><linearGradient id="sg" x1="0" y1="0" x2="0" y2="1"><stop offset="0" stop-color="#fff"/><stop offset="1" stop-color="#e2e2e2"/></linearGradient></defs><path d="M.4 0H49.200L43.300 6.600H5.900z" fill="url(#sg)" stroke="#8a8f9a" stroke-width=".7"/><path d="M21 1.200h7.400l-3.700 4.300z" fill="#000"/></svg></div>
<div class="a pn" style="left:306px;top:427px;width:1061px;height:300px;border-right:none"><div class="a" style="left:0;top:0;width:1059px;height:33px;background:linear-gradient(#dddddd,#f2f2f2 55%,#fff)"></div><div class="a" style="left:280px;top:32px;width:779px;height:1px;background:#9c9c9c"></div><div class="a tab on" style="left:295px;top:3px;width:46px;height:30px;line-height:28px">一般</div><div class="a tab" style="left:343px;top:3px;width:46px;height:29px;line-height:28px">硬碟</div><div class="a tab" style="left:391px;top:3px;width:42px;height:29px;line-height:28px">ISO</div><div class="a tab" style="left:435px;top:3px;width:46px;height:29px;line-height:28px">網卡</div><div class="a tab" style="left:483px;top:3px;width:46px;height:29px;line-height:28px">快照</div><div class="a tab" style="left:531px;top:3px;width:70px;height:29px;line-height:28px">客戶資訊</div><div class="a tab" style="left:603px;top:3px;width:70px;height:29px;line-height:28px">負載平衡</div><div class="a tab" style="left:675px;top:3px;width:58px;height:29px;line-height:28px">防火牆</div><div class="a tab" style="left:735px;top:3px;width:46px;height:29px;line-height:28px">標籤</div><div class="a tab" style="left:783px;top:3px;width:46px;height:29px;line-height:28px">工作</div><div class="a" style="left:43px;top:20px"><svg width="195" height="187" viewBox="0 0 195 187" ><defs><linearGradient id="mf" x1="0" y1="0" x2="0" y2="1"><stop offset="0" stop-color="#fdfdfd"/><stop offset="1" stop-color="#d6d6d6"/></linearGradient><linearGradient id="mn" x1="0" y1="0" x2="1" y2="0"><stop offset="0" stop-color="#8a8a8a"/><stop offset=".45" stop-color="#f4f4f4"/><stop offset=".6" stop-color="#e0e0e0"/><stop offset="1" stop-color="#7e7e7e"/></linearGradient><linearGradient id="mb" x1="0" y1="0" x2="0" y2="1"><stop offset="0" stop-color="#fff"/><stop offset=".6" stop-color="#f6f6f6"/><stop offset="1" stop-color="#dedede"/></linearGradient><linearGradient id="mr" x1="0" y1="0" x2="0" y2="1"><stop offset="0" stop-color="#d8d8d8"/><stop offset=".75" stop-color="#c2c2c2"/><stop offset="1" stop-color="#8c8c8c"/></linearGradient><radialGradient id="ms" cx=".5" cy=".5" r=".5"><stop offset="0" stop-color="#444" stop-opacity=".85"/><stop offset=".7" stop-color="#666" stop-opacity=".55"/><stop offset="1" stop-color="#999" stop-opacity="0"/></radialGradient><radialGradient id="pl" cx=".5" cy=".3" r=".8"><stop offset="0" stop-color="#b6e858"/><stop offset=".55" stop-color="#5cb81a"/><stop offset="1" stop-color="#2e8a0a"/></radialGradient></defs><ellipse cx="98" cy="171" rx="62" ry="13" fill="url(#ms)"/><ellipse cx="97.800" cy="168" rx="50.800" ry="13.200" fill="url(#mr)"/><ellipse cx="97.800" cy="162.200" rx="50.800" ry="12.600" fill="url(#mb)" stroke="#b4b4b4" stroke-width=".7"/><path d="M87 127h25l5 33c-5 5-32 5-37.600 0z" fill="url(#mn)"/><rect x="6.500" y="2.500" width="181" height="125" rx="2.500" fill="url(#mf)" stroke="#b0b0b0" stroke-width="1"/><rect x="13" y="8" width="168" height="113.800" rx="1.500" fill="#333"/><rect x="20.300" y="15.500" width="152.900" height="98.500" fill="#3a6ca6"/><rect x="22.8" y="16.6" width="4.400" height="3.600" fill="#c4d4ee"/><rect x="24.8" y="17.6" width="2.400" height="3.600" fill="#f4f6fa"/><rect x="22.1" y="22.5" width="5.800" height="1.100" fill="#9fc0e4" opacity=".6"/><path d="M31.0 16.5h2.700l1.400 1.400v3.900h-4.100z" fill="#f6efc6"/><rect x="30.1" y="22.5" width="5.800" height="1.100" fill="#9fc0e4" opacity=".6"/><path d="M39.2 16.6h2l.5.700h1.500v4.300h-4z" fill="#e8cd6e"/><rect x="40.2" y="18.0" width="2.700" height="3" fill="#f3e3a0"/><rect x="38.2" y="22.5" width="5.800" height="1.100" fill="#9fc0e4" opacity=".6"/><path d="M47.2 16.6h2l.5.700h1.500v4.300h-4z" fill="#e8cd6e"/><rect x="48.2" y="18.0" width="2.700" height="3" fill="#f3e3a0"/><rect x="46.2" y="22.5" width="5.800" height="1.100" fill="#9fc0e4" opacity=".6"/><path d="M55.4 16.5h2.700l1.400 1.400v3.900h-4.100z" fill="#eef3f7"/><rect x="55.4" y="17.0" width="1.300" height="1.300" fill="#7cc48a"/><rect x="54.5" y="22.5" width="5.800" height="1.100" fill="#9fc0e4" opacity=".6"/><circle cx="65.7" cy="19.2" r="2.500" fill="#f2f0d0"/><circle cx="65.7" cy="19.2" r="1" fill="#f4f4f4" opacity=".8"/><rect x="62.8" y="22.5" width="5.800" height="1.100" fill="#9fc0e4" opacity=".6"/><rect x="22.8" y="28.3" width="4.400" height="3.600" fill="#2a38a8"/><rect x="24.8" y="29.3" width="2.400" height="3.600" fill="#f4f6fa"/><rect x="22.1" y="34.2" width="5.800" height="1.100" fill="#9fc0e4" opacity=".6"/><path d="M31.0 28.2h2.700l1.400 1.400v3.900h-4.100z" fill="#f6efc6"/><rect x="30.1" y="34.2" width="5.800" height="1.100" fill="#9fc0e4" opacity=".6"/><rect x="38.8" y="28.5" width="4.600" height="4.600" fill="#d8222e"/><rect x="38.2" y="34.2" width="5.800" height="1.100" fill="#9fc0e4" opacity=".6"/><path d="M47.1 28.2h2.700l1.400 1.400v3.900h-4.100z" fill="#f6efc6"/><rect x="46.2" y="34.2" width="5.800" height="1.100" fill="#9fc0e4" opacity=".6"/><path d="M55.4 28.2h2.700l1.400 1.400v3.900h-4.100z" fill="#eef3f7"/><rect x="55.4" y="28.7" width="1.300" height="1.300" fill="#7cc48a"/><rect x="54.5" y="34.2" width="5.800" height="1.100" fill="#9fc0e4" opacity=".6"/><rect x="63.4" y="28.5" width="4.600" height="4.600" fill="#e6e6cc"/><rect x="62.8" y="34.2" width="5.800" height="1.100" fill="#9fc0e4" opacity=".6"/><rect x="22.7" y="40.2" width="4.600" height="4.600" fill="#f1f0e6"/><rect x="22.1" y="45.9" width="5.800" height="1.100" fill="#9fc0e4" opacity=".6"/><circle cx="33.0" cy="42.6" r="2.500" fill="#e8b030"/><circle cx="33.0" cy="42.6" r="1" fill="#f4f4f4" opacity=".8"/><rect x="30.1" y="45.9" width="5.800" height="1.100" fill="#9fc0e4" opacity=".6"/><path d="M39.1 39.9h2.700l1.400 1.400v3.900h-4.100z" fill="#eef3f7"/><rect x="40.1" y="41.6" width="2" height="1.600" fill="#d04030"/><rect x="38.2" y="45.9" width="5.800" height="1.100" fill="#9fc0e4" opacity=".6"/><path d="M47.1 39.9h2.700l1.400 1.400v3.900h-4.100z" fill="#eef3f7"/><rect x="48.1" y="41.6" width="2" height="1.600" fill="#e89030"/><rect x="46.2" y="45.9" width="5.800" height="1.100" fill="#9fc0e4" opacity=".6"/><path d="M55.4 39.9h2.700l1.400 1.400v3.900h-4.100z" fill="#eef3f7"/><rect x="55.4" y="40.4" width="1.300" height="1.300" fill="#7cc48a"/><rect x="54.5" y="45.9" width="5.800" height="1.100" fill="#9fc0e4" opacity=".6"/><rect x="63.4" y="40.2" width="4.600" height="4.600" fill="#34427c"/><rect x="62.8" y="45.9" width="5.800" height="1.100" fill="#9fc0e4" opacity=".6"/><path d="M23.0 51.3h2.700l1.400 1.400v3.900h-4.100z" fill="#eef3f7"/><rect x="23.0" y="51.8" width="1.300" height="1.300" fill="#7cc48a"/><rect x="22.1" y="57.3" width="5.800" height="1.100" fill="#9fc0e4" opacity=".6"/><path d="M31.1 51.4h2l.5.700h1.500v4.300h-4z" fill="#e8cd6e"/><rect x="32.1" y="52.8" width="2.700" height="3" fill="#f3e3a0"/><rect x="30.1" y="57.3" width="5.800" height="1.100" fill="#9fc0e4" opacity=".6"/><circle cx="41.1" cy="54.0" r="2.500" fill="#f0c222"/><circle cx="41.1" cy="54.0" r="1" fill="#f4f4f4" opacity=".8"/><rect x="38.2" y="57.3" width="5.800" height="1.100" fill="#9fc0e4" opacity=".6"/><path d="M47.1 51.3h2.700l1.400 1.400v3.900h-4.100z" fill="#f6efc6"/><rect x="46.2" y="57.3" width="5.800" height="1.100" fill="#9fc0e4" opacity=".6"/><path d="M55.5 51.4h2l.5.700h1.500v4.300h-4z" fill="#e8cd6e"/><rect x="56.5" y="52.8" width="2.700" height="3" fill="#f3e3a0"/><rect x="54.5" y="57.3" width="5.800" height="1.100" fill="#9fc0e4" opacity=".6"/><rect x="63.5" y="51.4" width="4.400" height="3.600" fill="#2638a6"/><rect x="65.5" y="52.4" width="2.400" height="3.600" fill="#f4f6fa"/><rect x="62.8" y="57.3" width="5.800" height="1.100" fill="#9fc0e4" opacity=".6"/><circle cx="25.0" cy="65.8" r="2.500" fill="#e8742a"/><circle cx="25.0" cy="65.8" r="1" fill="#f4f4f4" opacity=".8"/><rect x="22.1" y="69.1" width="5.800" height="1.100" fill="#9fc0e4" opacity=".6"/><path d="M31.0 63.1h2.700l1.400 1.400v3.900h-4.100z" fill="#f6efc6"/><rect x="30.1" y="69.1" width="5.800" height="1.100" fill="#9fc0e4" opacity=".6"/><circle cx="41.1" cy="65.8" r="2.500" fill="#d8261e"/><circle cx="41.1" cy="65.8" r="1" fill="#f4f4f4" opacity=".8"/><rect x="38.2" y="69.1" width="5.800" height="1.100" fill="#9fc0e4" opacity=".6"/><path d="M47.1 63.1h2.700l1.400 1.400v3.900h-4.100z" fill="#f6efc6"/><rect x="46.2" y="69.1" width="5.800" height="1.100" fill="#9fc0e4" opacity=".6"/><path d="M55.4 63.1h2.700l1.400 1.400v3.900h-4.100z" fill="#eef3f7"/><rect x="55.4" y="63.6" width="1.300" height="1.300" fill="#7cc48a"/><rect x="54.5" y="69.1" width="5.800" height="1.100" fill="#9fc0e4" opacity=".6"/><path d="M23.0 74.5h2.700l1.400 1.400v3.900h-4.100z" fill="#f6efc6"/><rect x="22.1" y="80.5" width="5.800" height="1.100" fill="#9fc0e4" opacity=".6"/><path d="M31.0 74.5h2.700l1.400 1.400v3.900h-4.100z" fill="#f6efc6"/><rect x="30.1" y="80.5" width="5.800" height="1.100" fill="#9fc0e4" opacity=".6"/><path d="M39.1 74.5h2.700l1.400 1.400v3.900h-4.100z" fill="#f6efc6"/><rect x="38.2" y="80.5" width="5.800" height="1.100" fill="#9fc0e4" opacity=".6"/><path d="M47.1 74.5h2.700l1.400 1.400v3.900h-4.100z" fill="#eef3f7"/><rect x="47.1" y="75.0" width="1.300" height="1.300" fill="#7cc48a"/><rect x="46.2" y="80.5" width="5.800" height="1.100" fill="#9fc0e4" opacity=".6"/><path d="M55.4 74.5h2.700l1.400 1.400v3.900h-4.100z" fill="#f6efc6"/><rect x="54.5" y="80.5" width="5.800" height="1.100" fill="#9fc0e4" opacity=".6"/><path d="M23.1 86.4h2l.5.700h1.500v4.300h-4z" fill="#e8cd6e"/><rect x="24.1" y="87.8" width="2.700" height="3" fill="#f3e3a0"/><rect x="22.1" y="92.3" width="5.800" height="1.100" fill="#9fc0e4" opacity=".6"/><path d="M31.0 86.3h2.700l1.400 1.400v3.900h-4.100z" fill="#f6efc6"/><rect x="30.1" y="92.3" width="5.800" height="1.100" fill="#9fc0e4" opacity=".6"/><path d="M39.2 86.4h2l.5.700h1.500v4.300h-4z" fill="#e8cd6e"/><rect x="40.2" y="87.8" width="2.700" height="3" fill="#f3e3a0"/><rect x="38.2" y="92.3" width="5.800" height="1.100" fill="#9fc0e4" opacity=".6"/><path d="M47.1 86.3h2.700l1.400 1.400v3.900h-4.100z" fill="#f6efc6"/><rect x="46.2" y="92.3" width="5.800" height="1.100" fill="#9fc0e4" opacity=".6"/><path d="M55.5 86.4h2l.5.700h1.500v4.300h-4z" fill="#e8cd6e"/><rect x="56.5" y="87.8" width="2.700" height="3" fill="#f3e3a0"/><rect x="54.5" y="92.3" width="5.800" height="1.100" fill="#9fc0e4" opacity=".6"/><circle cx="25.0" cy="100.7" r="2.500" fill="#22a6ee"/><circle cx="25.0" cy="100.7" r="1" fill="#f4f4f4" opacity=".8"/><rect x="22.1" y="104.0" width="5.800" height="1.100" fill="#9fc0e4" opacity=".6"/><path d="M31.1 98.1h2l.5.700h1.500v4.300h-4z" fill="#e8cd6e"/><rect x="32.1" y="99.5" width="2.700" height="3" fill="#f3e3a0"/><rect x="30.1" y="104.0" width="5.800" height="1.100" fill="#9fc0e4" opacity=".6"/><path d="M39.2 98.1h2l.5.700h1.500v4.300h-4z" fill="#e8cd6e"/><rect x="40.2" y="99.5" width="2.700" height="3" fill="#f3e3a0"/><rect x="38.2" y="104.0" width="5.800" height="1.100" fill="#9fc0e4" opacity=".6"/><path d="M47.2 98.1h2l.5.700h1.500v4.300h-4z" fill="#e8cd6e"/><rect x="48.2" y="99.5" width="2.700" height="3" fill="#f3e3a0"/><rect x="46.2" y="104.0" width="5.800" height="1.100" fill="#9fc0e4" opacity=".6"/><path d="M55.4 98.0h2.700l1.400 1.400v3.900h-4.100z" fill="#eef3f7"/><rect x="55.4" y="98.5" width="1.300" height="1.300" fill="#7cc48a"/><rect x="54.5" y="104.0" width="5.800" height="1.100" fill="#9fc0e4" opacity=".6"/><rect x="20.300" y="109" width="152.900" height="5" fill="#d6d3ca"/><rect x="21.500" y="110" width="4" height="3" fill="#7a6a2a"/><rect x="28" y="110" width="3" height="3" fill="#678"/><rect x="33" y="110" width="3" height="3" fill="#39c"/><rect x="38" y="110" width="3" height="3" fill="#ec5"/><rect x="43" y="110" width="3" height="3" fill="#d22"/><rect x="48" y="110" width="3" height="3" fill="#9b6"/><rect x="53" y="110" width="3" height="3" fill="#e73"/><rect x="150" y="110.500" width="14" height="2" fill="#99a"/><rect x="168" y="110" width="4" height="3" fill="#888"/><circle cx="174" cy="164.700" r="16.200" fill="url(#pl)" stroke="#1c2e0c" stroke-width="1.600"/><ellipse cx="174" cy="157.500" rx="11.500" ry="7" fill="#fff" opacity=".22"/><path d="M168.400 157.200l13.600 7.500-13.600 7.500z" fill="#fff" stroke="#e4f4d0" stroke-width=".8" stroke-linejoin="round"/></svg></div><div class="a" style="left:15px;top:217px;width:250px;height:22px;background:#fafafc"></div><div class="a" style="left:15px;top:220px;width:250px;height:16px;line-height:16px;text-align:center;font-weight:bold;font-size:14px;color:#000;letter-spacing:.1px">WcfMfGIn04_OA</div><div class="a" style="left:22px;top:242px"><svg width="236" height="36" viewBox="0 0 236 36" ><defs><linearGradient id="cb" x1="0" y1="0" x2="0" y2="1"><stop offset="0" stop-color="#fbfbfb"/><stop offset="1" stop-color="#dedede"/></linearGradient><linearGradient id="cp" x1="0" y1="0" x2="1" y2="0"><stop offset="0" stop-color="#ffd24a"/><stop offset=".5" stop-color="#ffb020"/><stop offset="1" stop-color="#ff9a10"/></linearGradient><linearGradient id="cs" x1="0" y1="0" x2="1" y2="1"><stop offset="0" stop-color="#ee6a5c"/><stop offset=".5" stop-color="#e04438"/><stop offset="1" stop-color="#d02e26"/></linearGradient></defs><rect x=".5" y=".5" width="235" height="35" rx="4" fill="url(#cb)" stroke="#a8a8a8"/><path d="M19.500 9.500l18 9-18 9z" fill="#d6d6d6" stroke="#9a9a9a" stroke-width="1"/><rect x="56.500" y="9" width="6" height="18.500" rx="1" fill="url(#cp)" stroke="#f08c00" stroke-width="1"/><rect x="65.500" y="9" width="6" height="18.500" rx="1" fill="url(#cp)" stroke="#f08c00" stroke-width="1"/><path d="M89.500 14h4.500l2-3.500h7.500l2 3.500h4.500v13.500h-20.500z" fill="#8f8f8f"/><circle cx="99.800" cy="20.300" r="5.200" fill="#b9b9b9" stroke="#a2a2a2" stroke-width="1.400"/><circle cx="99.800" cy="20.300" r="2.300" fill="#8f8f8f"/><path d="M147 8.500v9.800h-9.800l3.300-3.300a5.300 5.300 0 1 0 .6 6.600l4.300 2.600a10.400 10.400 0 1 1-1.300-12.800z" fill="#8e8e8e"/><rect x="162.500" y="8.500" width="19.500" height="19.500" rx="1" fill="url(#cs)" stroke="#c83a32" stroke-width="1"/><rect x="198.500" y="8.500" width="19.500" height="19.500" rx="3" fill="#d6062a" stroke="#3a0a10" stroke-width="1.200"/><circle cx="208.200" cy="18.200" r="5.600" fill="none" stroke="#fff" stroke-width="2"/><rect x="207.200" y="14.500" width="2" height="7" fill="#fff"/></svg></div><div id="ttl" class="a" style="left:281px;top:52px">虛擬機器資訊</div><div class="a" style="left:281px;top:87px;width:760px;height:3px;background:#8a8a8a"></div><div class="a lb" style="left:227px;top:114px;width:200px"><span class="c">虛擬機器名稱</span><b>:</b></div><div class="a vv" style="left:439px;top:114px;letter-spacing:-0.2px">WcfMfGIn04_OA</div><div class="a lb" style="left:227px;top:146px;width:200px"><span class="c">描述</span><b>:</b></div><div class="a vv" style="left:439px;top:146px;letter-spacing:0px">供內部系統資料交換的WCF</div><div class="a lb" style="left:227px;top:178px;width:200px"><span class="c">作業系統類型</span><b>:</b></div><div class="a vv" style="left:439px;top:178px;letter-spacing:0px"></div><div class="a lb" style="left:227px;top:210px;width:200px"><span class="c">電腦名稱</span><b>:</b></div><div class="a vv" style="left:439px;top:210px;letter-spacing:0px">WcfMfGIn04_OA.ccasd.com</div><div class="a lb" style="left:227px;top:242px;width:200px"><span class="c">虛擬機器狀態</span><b>:</b></div><div class="a vv" style="left:439px;top:242px;letter-spacing:0.3px">Running</div><div class="a lb" style="left:227px;top:274px;width:200px"><span class="c">範本名稱</span><b>:</b></div><div class="a vv" style="left:439px;top:274px;letter-spacing:0.27px">DefaultTemplate</div><div class="a lb" style="left:607px;top:114px;width:200px"><span class="c">記憶體大小</span>(GB)<b>:</b></div><div class="a vv" style="left:819px;top:114px;letter-spacing:.2px">8</div><div class="a lb" style="left:607px;top:146px;width:200px">CPU<span class="c">數量</span>(Core)<b>:</b></div><div class="a vv" style="left:819px;top:146px;letter-spacing:.2px">4</div><div class="a lb" style="left:607px;top:178px;width:200px"><span class="c">高可用性</span><b>:</b></div><div class="a vv" style="left:819px;top:178px;letter-spacing:.2px">Y</div><div class="a lb" style="left:607px;top:210px;width:200px"><span class="c">類型</span><b>:</b></div><div class="a vv" style="left:819px;top:210px;letter-spacing:.2px">AP</div><div class="a lb" style="left:607px;top:242px;width:200px"><span class="c">建立日期</span><b>:</b></div><div class="a vv" style="left:819px;top:242px;letter-spacing:.2px">2014-05-09 16:05:17</div><div class="a lb" style="left:607px;top:274px;width:200px"><span class="c">虛擬機器優先指標</span><b>:</b></div><div class="a vv" style="left:819px;top:274px;letter-spacing:.2px"></div><div class="a sbt" style="left:1042px;top:33px;width:17px;height:265px"><div class="a tri-u" style="left:4.5px;top:7px"></div><div class="a sbh" style="left:2px;top:17px;width:13px;height:92px"></div><div class="a tri-d" style="left:4.5px;top:254px"></div></div></div>
<div class="a" style="left:0;top:727px;width:1366px;height:6px;background:linear-gradient(#a4b3cc,#98a7c2 50%,#8694b0)"></div><div id="ft" class="a" style=""><div class="a fb" style="left:1165px;width:90px"><div class="a" style="left:9px;top:4px"><svg width="17" height="16" viewBox="0 0 17 16" ><defs><linearGradient id="gw" x1="0" y1="0" x2="0" y2="1"><stop offset="0" stop-color="#ffd75e"/><stop offset="1" stop-color="#f79a10"/></linearGradient></defs><path d="M8.200 1.400L15.300 14.300H1.100z" fill="url(#gw)" stroke="#e2901a" stroke-width="1.800" stroke-linejoin="round"/><path d="M8.200 2.600L14 13.600H2.400z" fill="url(#gw)"/><rect x="7.200" y="4.800" width="2" height="5.600" fill="#1a1a1a"/><rect x="7.200" y="11.400" width="2" height="2" fill="#1a1a1a"/></svg></div><div class="a" style="left:33px;top:5px;height:16px;line-height:16px">警告</div><div class="a bd" style="left:65px;top:5px">3</div></div><div class="a fb" style="left:1261px;width:90px"><div class="a" style="left:11px;top:3px"><svg width="12" height="17" viewBox="0 0 12 17" ><rect x=".6" y="2.600" width="10.800" height="13.800" rx="1" fill="#d2a660" stroke="#8a5a20" stroke-width="1.200"/><rect x="2.200" y="4.600" width="7.600" height="10.200" fill="#fff"/><g fill="#a8a8a8"><rect x="3.600" y="7" width="4.800" height=".9"/><rect x="3.600" y="9" width="4.800" height=".9"/><rect x="3.600" y="11" width="4.800" height=".9"/><rect x="3.600" y="13" width="3.200" height=".9"/></g><path d="M3.400 4.800V3.200h1.300C4.700 1.500 5.200.7 6 .7s1.300.8 1.300 2.500h1.300v1.600z" fill="#5a5a5a" stroke="#222" stroke-width=".6"/><circle cx="6" cy="2.300" r=".6" fill="#eee"/></svg></div><div class="a" style="left:34px;top:5px;height:16px;line-height:16px">工作</div><div class="a bd" style="left:65px;top:5px">0</div></div></div>
</body></html>
